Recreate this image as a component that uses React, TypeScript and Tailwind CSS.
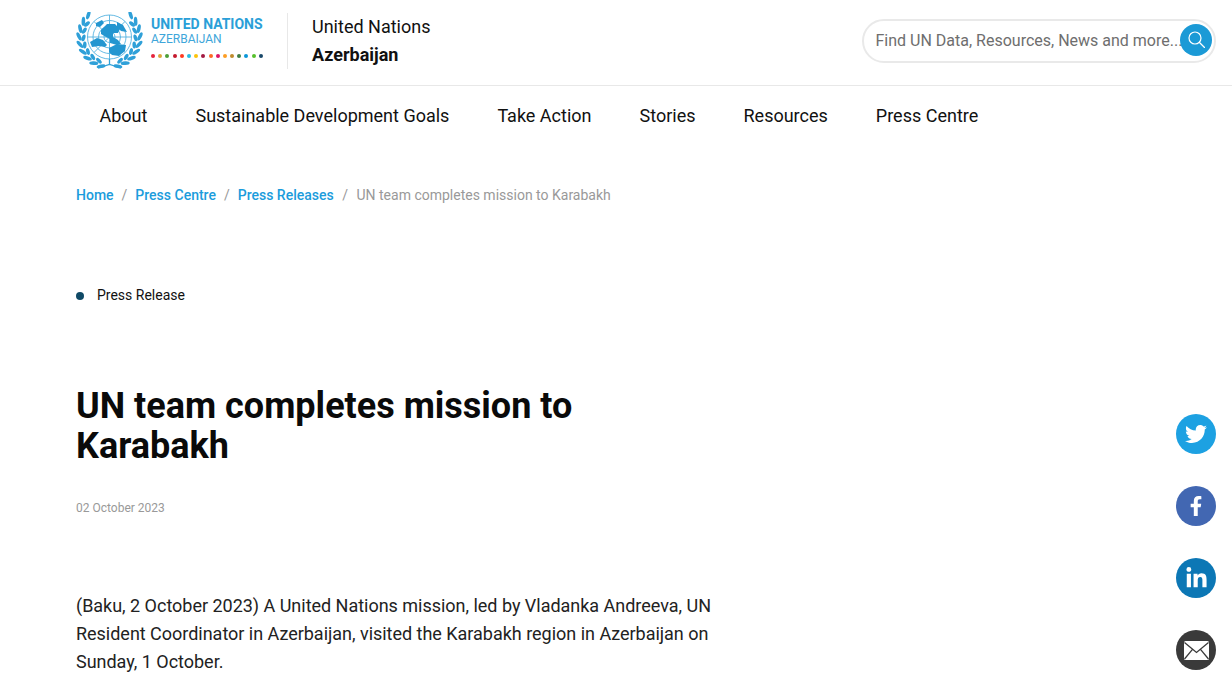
import React from 'react';
import { FaTwitter, FaFacebookF, FaLinkedinIn } from 'react-icons/fa';

const navItems = ['About', 'Sustainable Development Goals', 'Take Action', 'Stories', 'Resources', 'Press Centre'];
const dotColors = ['#e5243b', '#dda63a', '#4c9f38', '#c5192d', '#ff3a21', '#26bde2', '#fcc30b', '#a21942', '#fd6925', '#dd1367', '#fd9d24', '#bf8b2e', '#3f7e44', '#0a97d9', '#56c02b', '#19486a'];

// wreath leaves: angle measured from the bottom of the globe
const outerLeaves = [16, 31, 46, 61, 76, 91, 106, 121, 136];
const innerLeaves = [24, 40, 56, 72, 88, 104, 120];
const meridians = [0, 45, 90, 135];

function Leaf({ angle, side, radius, ry, tilt }: { angle: number; side: 1 | -1; radius: number; ry: number; tilt: number }) {
  const rad = (angle * Math.PI) / 180;
  const x = 33.5 + side * radius * Math.sin(rad);
  const y = 25 + radius * Math.cos(rad);
  const rot = side * (90 - angle) + side * tilt;
  return <ellipse cx={x} cy={y} rx="1.800" ry={ry} transform={`rotate(${rot} ${x} ${y})`} />;
}

function Emblem() {
  return (
    <svg width="68" height="57" viewBox="0 0 68 57" className="shrink-0">
      <g fill="none" stroke="#55b2e0" strokeWidth="0.900">
        <circle cx="33.500" cy="25" r="22" />
        <circle cx="33.500" cy="25" r="16.500" />
        <circle cx="33.500" cy="25" r="11" />
        <circle cx="33.500" cy="25" r="5.500" />
        {meridians.map(r => (
          <path key={r} d="M33.500 3V47" transform={`rotate(${r} 33.500 25)`} />
        ))}
      </g>
      <g fill="#2496d0">
        <path d="M25 18l6-6 8 0 5 5-2 4-5 0 0 4 5 3 3 4-4 1-7-2 0-4-4-2-5-3z" />
        <path d="M41 10l6 3 4 7-6-1-4-4z" />
        <path d="M14 30l7-4 6 2 4 5-2 2-6-1-7 1z" />
        <path d="M33 36l8-4 9 1-1 6-6 5-7-1-3-3z" />
        <path d="M20 11l6-3 2 3-4 4-4-1z" />
      </g>
      <g fill="#2fa0d8">
        {outerLeaves.map(a => (
          <React.Fragment key={a}>
            <Leaf angle={a} side={-1} radius={30.500} ry={4.500} tilt={28} />
            <Leaf angle={a} side={1} radius={30.500} ry={4.500} tilt={28} />
          </React.Fragment>
        ))}
        {innerLeaves.map(a => (
          <React.Fragment key={a}>
            <Leaf angle={a} side={-1} radius={26} ry={3.500} tilt={-20} />
            <Leaf angle={a} side={1} radius={26} ry={3.500} tilt={-20} />
          </React.Fragment>
        ))}
      </g>
      <path d="M22 56L33.500 52.500 45 56M33.500 47v5.500" fill="none" stroke="#2fa0d8" strokeWidth="1.300" />
    </svg>
  );
}

function MailIcon() {
  return (
    <svg width="25" height="19" viewBox="0 0 25 19">
      <rect width="25" height="19" rx="1.500" fill="#fff" />
      <path d="M.5 1.500L12.500 11.500 24.500 1.500M.5 18L8.700 8.200M24.500 18L16.300 8.200" fill="none" stroke="#3a3a3a" strokeWidth="1.300" />
    </svg>
  );
}

function SearchIcon() {
  return (
    <svg width="17" height="17" viewBox="0 0 17 17" fill="none" stroke="#fff" strokeWidth="1.200" strokeLinecap="round">
      <circle cx="7" cy="7" r="6" />
      <path d="M11.500 11.500l5 5" />
    </svg>
  );
}

export default function App() {
  return (
    <div className="relative h-[698px] overflow-hidden bg-white font-['Roboto',sans-serif] text-[#111]">
      <header className="flex h-[86px] items-center justify-between border-b border-[#e8e8e8] pl-[76px] pr-4">
        <div className="mt-[-4px] flex items-center">
          <Emblem />
          <div className="ml-[7px] mt-[-8px] w-[112px]">
            <div className="text-[14px] font-bold leading-[16px] text-[#2a9fd8] whitespace-nowrap">UNITED NATIONS</div>
            <div className="text-[12px] leading-[14px] text-[#3ea6da]">AZERBAIJAN</div>
            <div className="mt-[8px] flex justify-between">
              {dotColors.map((c, i) => (
                <span key={i} className="h-1 w-1 rounded-full" style={{ backgroundColor: c }} />
              ))}
            </div>
          </div>
          <div className="ml-6 h-[56px] w-px bg-[#e8e8e8]" />
          <div className="ml-6 text-[18px] leading-[28px]">
            <div>United Nations</div>
            <div className="font-bold">Azerbaijan</div>
          </div>
        </div>
        <div className="relative mt-[-4px] flex h-11 w-[354px] items-center rounded-full border-2 border-[#e9e9e9] pl-[11.5px] pr-[3px]">
          <span className="flex-1 text-[16px] whitespace-nowrap text-[#6e6e6e]">Find UN Data, Resources, News and more...</span>
          <span className="absolute right-[2px] top-[3px] flex h-8 w-8 items-center justify-center rounded-full bg-[#1b9ad6]">
            <SearchIcon />
          </span>
        </div>
      </header>

      <nav className="flex h-[58px] items-center gap-12 pl-[99.5px] text-[18px]">
        {navItems.map(item => (
          <span key={item} className="whitespace-nowrap">{item}</span>
        ))}
      </nav>

      <main className="pl-[76px]">
        <div className="mt-[41px] flex items-center text-[14px] leading-5 font-medium text-[#1b9cdc]">
          <span>Home</span>
          <span className="mx-2 font-normal text-[#999]">/</span>
          <span>Press Centre</span>
          <span className="mx-2 font-normal text-[#999]">/</span>
          <span>Press Releases</span>
          <span className="mx-[8.5px] font-normal text-[#999]">/</span>
          <span className="font-normal text-[#999]">UN team completes mission to Karabakh</span>
        </div>

        <div className="mt-[80px] flex items-center text-[14px] leading-5">
          <span className="mt-[2px] h-2 w-2 rounded-full bg-[#0f4a66]" />
          <span className="ml-[13px]">Press Release</span>
        </div>

        <h1 className="mt-[81px] w-[560px] text-[36px] font-bold leading-[40px] text-[#0a0a0a]">UN team completes mission to Karabakh</h1>

        <div className="mt-[34px] text-[12px] leading-4 text-[#999]">02 October 2023</div>

        <p className="mt-[76px] w-[650px] text-[18px] leading-[28px] tracking-[-0.02px] text-[#222]">
          (Baku, 2 October 2023) A United Nations mission, led by Vladanka Andreeva, UN Resident Coordinator in Azerbaijan, visited the Karabakh region in Azerbaijan on Sunday, 1 October.
        </p>
      </main>

      <div className="absolute right-4 top-[414px] flex flex-col gap-8 text-white">
        <span className="flex h-10 w-10 items-center justify-center rounded-full bg-[#1da1e2] text-[22px]"><FaTwitter /></span>
        <span className="flex h-10 w-10 items-center justify-center rounded-full bg-[#4267b2] text-[20px]"><FaFacebookF /></span>
        <span className="flex h-10 w-10 items-center justify-center rounded-full bg-[#0c77b5] text-[23px]"><FaLinkedinIn /></span>
        <span className="flex h-10 w-10 items-center justify-center rounded-full bg-[#3a3a3a]"><MailIcon /></span>
      </div>
    </div>
  );
}
